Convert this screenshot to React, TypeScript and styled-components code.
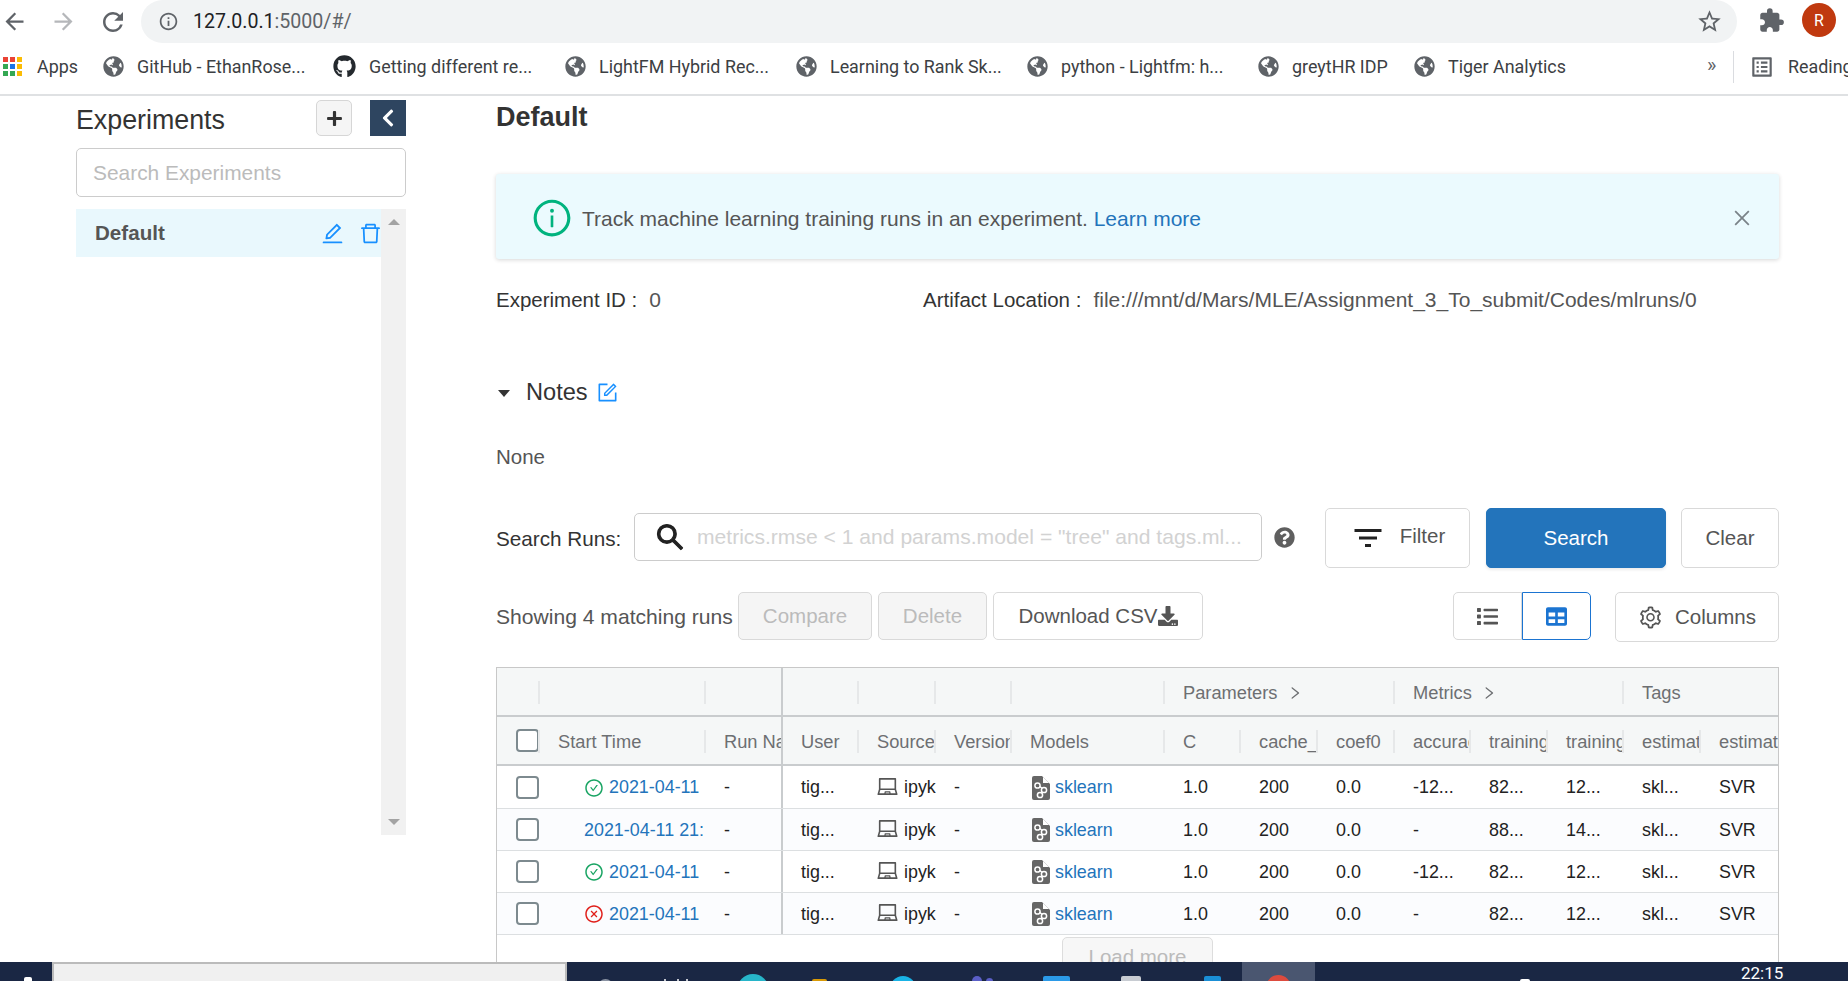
import React from "react";
import styled, { createGlobalStyle } from "styled-components";
import {
  AiOutlineCheckCircle,
  AiOutlineClose,
  AiOutlineCloseCircle,
  AiOutlineDelete,
  AiOutlineEdit,
  AiOutlineForm,
  AiOutlineInfoCircle,
  AiOutlineLaptop,
  AiOutlineRight,
  AiOutlineSearch,
  AiOutlineSetting,
} from "react-icons/ai";
import {
  FaChevronLeft,
  FaDownload,
  FaGithub,
  FaGlobeAmericas,
  FaList,
  FaPlus,
  FaQuestionCircle,
  FaTable,
} from "react-icons/fa";
import {
  MdArrowBack,
  MdArrowForward,
  MdExtension,
  MdFilterList,
  MdInfoOutline,
  MdOutlineListAlt,
  MdRefresh,
  MdStarBorder,
} from "react-icons/md";

const GlobalStyle = createGlobalStyle`
    html, body {
        margin: 0;
        padding: 0;
        background: #fff;
    }
    * {
        box-sizing: border-box;
    }
`;

const Screen = styled.div`
  width: 1848px;
  height: 981px;
  overflow: hidden;
  display: flex;
  flex-direction: column;
  font-family: "Liberation Sans", Arial, sans-serif;
  color: #333;
`;

/* browser chrome */
const Toolbar = styled.div`
  height: 43px;
  flex: none;
  display: flex;
  align-items: stretch;
`;

const NavButton = styled.div<{ $dim?: boolean }>`
  width: 49px;
  flex: none;
  display: flex;
  align-items: center;
  justify-content: center;
  font-size: 27px;
  color: ${(p) => (p.$dim ? "#b5b7ba" : "#5f6368")};
`;

const NavGroup = styled.div`
  width: 141px;
  flex: none;
  display: flex;
  & > :first-child {
    margin-left: -10px;
  }
`;

const AddressBar = styled.div`
  width: 1596px;
  flex: none;
  background: #f1f3f4;
  border-radius: 24px;
  display: flex;
  align-items: center;
  padding: 0 14px 0 17px;
  font-family: Roboto, sans-serif;
  font-size: 19.6px;
  color: #202124;
  svg {
    color: #5f6368;
  }
`;

const Url = styled.span`
  margin-left: 14px;
  flex: 1;
  span {
    color: #5f6368;
  }
`;

const Avatar = styled.div`
  width: 34px;
  height: 34px;
  border-radius: 50%;
  background: #c0390f;
  color: #fff;
  font-family: Roboto, sans-serif;
  font-size: 16px;
  display: flex;
  align-items: center;
  justify-content: center;
`;

const ProfileArea = styled.div`
  flex: 1;
  display: flex;
  align-items: center;
  padding: 0 0 3px 21px;
  gap: 17px;
  color: #5f6368;
`;

const BookmarkBar = styled.div`
  height: 53px;
  flex: none;
  border-bottom: 2px solid #dfe1e3;
  display: flex;
  align-items: center;
  padding: 0 0 4px 3px;
  font-family: Roboto, sans-serif;
  font-size: 17.9px;
  color: #3c4043;
  white-space: nowrap;
  overflow: hidden;
`;

const Bookmark = styled.div<{ $w: number; $gap?: number }>`
  width: ${(p) => p.$w}px;
  flex: none;
  display: flex;
  align-items: center;
  gap: ${(p) => p.$gap ?? 13}px;
  svg {
    color: #5f6368;
    flex: none;
  }
`;

const BookmarkEnd = styled.div`
  flex: 1;
  display: flex;
  align-items: center;
  color: #5f6368;
`;

const Chevrons = styled.span`
  margin-left: 133px;
  width: 27px;
  height: 32px;
  border-right: 1px solid #dadce0;
  font-size: 20px;
  line-height: 28px;
`;

const ReadingIcon = styled(MdOutlineListAlt)`
  margin-left: 15px;
  flex: none;
`;

const ReadingLabel = styled.span`
  margin-left: 13px;
  color: #3c4043;
`;

const AppsGrid = styled.div`
  width: 20px;
  height: 20px;
  flex: none;
  display: grid;
  grid-template-columns: repeat(3, 5px);
  grid-auto-rows: 5px;
  gap: 2px;
`;

const AppsDot = styled.i<{ $c: string }>`
  background: ${(p) => p.$c};
`;

/* page body */
const Body = styled.div`
  flex: 1;
  min-height: 0;
  display: flex;
  overflow: hidden;
  padding-left: 76px;
`;

const Sidebar = styled.aside`
  width: 330px;
  flex: none;
  padding-top: 4px;
  display: flex;
  flex-direction: column;
`;

const SideHead = styled.div`
  display: flex;
  align-items: center;
  height: 36px;
`;

const SideTitle = styled.div`
  flex: 1;
  padding-top: 4px;
  font-size: 26.8px;
  color: #333;
`;

const PlusButton = styled.div`
  width: 36px;
  height: 36px;
  border: 1px solid #d6d6d6;
  border-radius: 5px;
  background: #f5f5f5;
  color: #333;
  font-size: 17px;
  display: flex;
  align-items: center;
  justify-content: center;
  margin-right: 18px;
`;

const CollapseButton = styled.div`
  width: 36px;
  height: 36px;
  background: #2e4560;
  color: #fff;
  font-size: 20px;
  display: flex;
  align-items: center;
  justify-content: center;
`;

const SideSearch = styled.div`
  height: 49px;
  margin-top: 12px;
  border: 1px solid #ccc;
  border-radius: 5px;
  padding-left: 16px;
  display: flex;
  align-items: center;
  font-size: 20.9px;
  color: #bbb;
`;

const ExperimentList = styled.div`
  margin-top: 12px;
  height: 626px;
  display: flex;
`;

const ListColumn = styled.div`
  flex: 1;
`;

const ExperimentItem = styled.div`
  height: 48px;
  background: #e9f8fd;
  display: flex;
  align-items: center;
  padding: 0 0 0 19px;
  font-size: 20.6px;
  font-weight: 700;
  color: #555;
  svg {
    color: #1890ff;
    font-size: 25px;
  }
`;

const ItemName = styled.span`
  flex: 1;
`;

const ItemIcons = styled.span`
  display: flex;
  gap: 13px;
  margin-right: -2px;
`;

const ScrollTrack = styled.div`
  width: 25px;
  background: #f1f1f1;
  display: flex;
  flex-direction: column;
  justify-content: space-between;
  align-items: center;
  padding: 10px 0;
`;

const ScrollArrow = styled.i<{ $down?: boolean }>`
  width: 0;
  height: 0;
  border-left: 6px solid transparent;
  border-right: 6px solid transparent;
  ${(p) =>
    p.$down ? "border-top: 6px solid #a3a3a3;" : "border-bottom: 6px solid #a3a3a3;"}
`;

const Main = styled.main`
  width: 1283px;
  flex: none;
  margin-left: 90px;
  padding-top: 4px;
  font-size: 20.5px;
`;

const Title = styled.h1`
  margin: 0;
  height: 34px;
  line-height: 34px;
  font-size: 27px;
  font-weight: 700;
  color: #333;
`;

const Alert = styled.div`
  margin-top: 40px;
  height: 85px;
  background: #ebfafe;
  border-radius: 3px;
  box-shadow: 0 1px 4px rgba(0, 0, 0, 0.16);
  display: flex;
  align-items: center;
  padding: 2px 26px 0 38px;
  font-size: 21px;
  color: #555;
`;

const AlertIcon = styled(AiOutlineInfoCircle)`
  color: #00b37e;
  font-size: 42px;
  margin: 0 9px 0 -3px;
`;

const AlertText = styled.span`
  flex: 1;
  padding-top: 2px;
`;

const Anchor = styled.a`
  color: #2374bb;
`;

const CloseIcon = styled(AiOutlineClose)`
  color: #7a8288;
  font-size: 22px;
`;

const Details = styled.div`
  margin-top: 29px;
  height: 24px;
  line-height: 24px;
  display: flex;
`;

const Detail = styled.div<{ $w?: number }>`
  width: ${(p) => (p.$w ? `${p.$w}px` : "auto")};
  color: #555;
  font-size: 21px;
  white-space: nowrap;
`;

const DetailLabel = styled.span`
  color: #333;
  font-size: 20.5px;
  margin-right: 12px;
`;

const NotesRow = styled.div`
  margin-top: 68px;
  height: 24px;
  display: flex;
  align-items: center;
  font-size: 23.6px;
  color: #333;
  svg {
    color: #1890ff;
    font-size: 23px;
    margin-left: 8px;
  }
`;

const Caret = styled.i`
  width: 0;
  height: 0;
  margin: 2px 16px 0 2px;
  border-left: 6.5px solid transparent;
  border-right: 6.5px solid transparent;
  border-top: 7px solid #333;
`;

const NotesBody = styled.div`
  margin-top: 41px;
  height: 24px;
  line-height: 24px;
  color: #555;
`;

const SearchRow = styled.div`
  margin-top: 39px;
  height: 60px;
  display: flex;
  align-items: center;
`;

const SearchLabel = styled.span`
  width: 138px;
  flex: none;
  font-size: 20.7px;
  padding-top: 1px;
`;

const QueryBox = styled.div`
  width: 628px;
  height: 48px;
  border: 1px solid #ccc;
  border-radius: 5px;
  display: flex;
  align-items: center;
  padding-left: 20px;
  margin-top: -2px;
  font-size: 21.1px;
  color: #d2d2d2;
  white-space: nowrap;
  overflow: hidden;
`;

const QueryIcon = styled(AiOutlineSearch)`
  color: #222;
  font-size: 32px;
  flex: none;
  margin: 0 11px 0 -1px;
  stroke: currentColor;
  stroke-width: 40;
`;

const HelpIcon = styled(FaQuestionCircle)`
  color: #5f5f5f;
  font-size: 21px;
  flex: none;
  margin: -2px 30px 0 12px;
`;

const Button = styled.div<{ $w: number; $h?: number; $primary?: boolean; $off?: boolean }>`
  width: ${(p) => p.$w}px;
  height: ${(p) => p.$h ?? 60}px;
  flex: none;
  border: 1px solid ${(p) => (p.$primary ? "#2374bb" : "#d9d9d9")};
  border-radius: 5px;
  background: ${(p) => (p.$primary ? "#2374bb" : p.$off ? "#f5f5f5" : "#fff")};
  color: ${(p) => (p.$primary ? "#fff" : p.$off ? "#bbb" : "#555")};
  display: flex;
  align-items: center;
  justify-content: center;
  font-size: 20.5px;
  white-space: nowrap;
`;

const FilterButton = styled(Button)`
  gap: 14px;
  margin-right: 16px;
  svg {
    color: #222;
    font-size: 36px;
  }
`;

const FilterLabel = styled.span`
  margin-top: -4px;
`;

const SearchButton = styled(Button)`
  margin-right: 15px;
  box-shadow: 0 2px 3px rgba(0, 0, 0, 0.08);
`;

const ActionRow = styled.div`
  margin-top: 24px;
  height: 50px;
  display: flex;
  align-items: flex-start;
`;

const RunCount = styled.span`
  width: 242px;
  flex: none;
  height: 48px;
  line-height: 50px;
  font-size: 21.1px;
  color: #555;
`;

const ActionGroup = styled.div`
  flex: 1;
  display: flex;
  gap: 6px;
`;

const DownloadIcon = styled(FaDownload)`
  color: #555;
  font-size: 20px;
`;

const ViewToggle = styled.div<{ $on?: boolean }>`
  width: 69px;
  height: 48px;
  flex: none;
  border: 1px solid ${(p) => (p.$on ? "#1b74d1" : "#d9d9d9")};
  border-radius: ${(p) => (p.$on ? "0 5px 5px 0" : "5px 0 0 5px")};
  color: ${(p) => (p.$on ? "#1b74d1" : "#555")};
  display: flex;
  align-items: center;
  justify-content: center;
  font-size: 21px;
`;

const ColumnsButton = styled(Button)`
  margin-left: 24px;
  gap: 12px;
  svg {
    font-size: 25px;
  }
`;

/* runs table */
const Table = styled.div`
  margin-top: 25px;
  width: 1283px;
  height: 300px;
  border: 1px solid #c8c8c8;
  border-bottom: none;
  position: relative;
  font-size: 17.9px;
`;

const Row = styled.div<{ $h: number; $alt?: boolean; $head?: boolean; $strong?: boolean }>`
  height: ${(p) => p.$h}px;
  display: grid;
  grid-template-columns: 43px 166px 77px 76px 77px 76px 153px 76px 77px 77px 76px 77px 76px 77px 77px;
  background: ${(p) => (p.$head ? "#f5f7f7" : p.$alt ? "#fbfcfe" : "#fff")};
  border-bottom: ${(p) => (p.$strong ? "2px solid #c9ccce" : "1px solid #dcdfe1")};
  color: ${(p) => (p.$head ? "#6d6f72" : "#222")};
`;

const HeadCell = styled.div<{ $divider?: boolean; $fixedEnd?: boolean; $span?: number }>`
  grid-column: span ${(p) => p.$span ?? 1};
  position: relative;
  display: flex;
  align-items: center;
  gap: 9px;
  padding: 3px 0 0 18px;
  font-size: 18.3px;
  white-space: nowrap;
  overflow: hidden;
  border-right: ${(p) => (p.$fixedEnd ? "2px solid #c9ccce" : "none")};
  &::after {
    content: "";
    display: ${(p) => (p.$divider ? "block" : "none")};
    position: absolute;
    right: 0;
    top: 13px;
    bottom: 11px;
    width: 2px;
    background: #e6e8e9;
  }
  svg {
    font-size: 16px;
  }
`;

const BoxCell = styled.div`
  display: flex;
  align-items: center;
  padding-left: 19px;
`;

const Check = styled.i`
  width: 23px;
  height: 23px;
  flex: none;
  border: 2px solid #7d8a8f;
  border-radius: 4px;
  background: #fff;
`;

const HeadBoxCell = styled(HeadCell)`
  padding: 0 0 0 19px;
`;

const Cell = styled.div<{ $fixedEnd?: boolean }>`
  display: flex;
  align-items: center;
  gap: 5px;
  padding: 1px 0 0 18px;
  white-space: nowrap;
  overflow: hidden;
  border-right: ${(p) => (p.$fixedEnd ? "2px solid #c9ccce" : "none")};
`;

const TimeCell = styled(Cell)`
  padding-left: 44px;
`;

const RunLink = styled.span`
  color: #2374bb;
`;

const OkIcon = styled(AiOutlineCheckCircle)`
  color: #19a463;
  font-size: 20px;
  flex: none;
`;

const FailIcon = styled(AiOutlineCloseCircle)`
  color: #e0201b;
  font-size: 20px;
  flex: none;
`;

const SourceIcon = styled(AiOutlineLaptop)`
  color: #555;
  font-size: 23px;
  flex: none;
  margin: -3px 0 0 -1px;
`;

const ModelDoc = styled.svg`
  width: 18px;
  height: 24px;
  flex: none;
  margin-left: 2px;
`;

const LoadMore = styled.div`
  position: absolute;
  left: 565px;
  top: 269px;
  width: 151px;
  height: 40px;
  border: 1px solid #ddd;
  border-radius: 5px;
  background: #f7f7f7;
  color: #bbb;
  font-size: 20.5px;
  display: flex;
  align-items: center;
  justify-content: center;
`;

/* windows taskbar */
const Taskbar = styled.div`
  height: 19px;
  flex: none;
  background: #1a2744;
  position: relative;
  overflow: hidden;
  display: flex;
`;

const WinSearch = styled.div`
  width: 515px;
  margin-left: 52px;
  background: #f0f0f0;
  border: 2px solid #bbb;
  border-bottom: none;
  flex: none;
`;

const TrayIcon = styled.i<{ $x: number; $w: number; $top: number; $c: string; $round?: boolean }>`
  position: absolute;
  left: ${(p) => p.$x}px;
  top: ${(p) => p.$top}px;
  width: ${(p) => p.$w}px;
  height: ${(p) => p.$w}px;
  background: ${(p) => p.$c};
  border-radius: ${(p) => (p.$round ? "50%" : "2px")};
`;

const ActiveTask = styled.div`
  position: absolute;
  left: 1242px;
  top: 0;
  width: 73px;
  height: 19px;
  background: #4a5670;
`;

const Clock = styled.span`
  position: absolute;
  left: 1741px;
  top: 1px;
  font-family: Roboto, sans-serif;
  font-size: 17px;
  color: #fff;
`;

const appColours = ["#ea4335", "#ea4335", "#fbbc04", "#34a853", "#1a73e8", "#fbbc04", "#34a853", "#34a853", "#fbbc04"];

const bookmarks = [
  { w: 230, text: "GitHub - EthanRose..." },
  { w: 232, text: "Getting different re...", github: true },
  { w: 231, text: "LightFM Hybrid Rec..." },
  { w: 231, text: "Learning to Rank Sk..." },
  { w: 231, text: "python - Lightfm: h..." },
  { w: 156, text: "greytHR IDP" },
  { w: 160, text: "Tiger Analytics" },
];

const runs = [
  { status: "ok", time: "2021-04-11", acc: "-12...", t1: "82...", t2: "12..." },
  { status: "none", time: "2021-04-11 21:", acc: "-", t1: "88...", t2: "14..." },
  { status: "ok", time: "2021-04-11", acc: "-12...", t1: "82...", t2: "12..." },
  { status: "fail", time: "2021-04-11", acc: "-", t1: "82...", t2: "12..." },
];

const headers = ["C", "cache_s", "coef0", "accurac", "training", "training", "estimat", "estimat"];

const trayIcons = [
  { x: 24, w: 8, top: 15, c: "#fff" },
  { x: 598, w: 15, top: 17, c: "#8b93a3", round: true },
  { x: 664, w: 2, top: 17, c: "#fff" },
  { x: 677, w: 2, top: 17, c: "#fff" },
  { x: 686, w: 2, top: 17, c: "#fff" },
  { x: 737, w: 32, top: 12, c: "#27b5c9", round: true },
  { x: 812, w: 15, top: 17, c: "#d99a06" },
  { x: 890, w: 26, top: 14, c: "#19b3e6", round: true },
  { x: 972, w: 10, top: 14, c: "#5b5fc7", round: true },
  { x: 986, w: 7, top: 16, c: "#5b5fc7", round: true },
  { x: 1043, w: 27, top: 14, c: "#2b9ae8" },
  { x: 1121, w: 20, top: 14, c: "#c8ccd2" },
  { x: 1204, w: 17, top: 14, c: "#1a8fd6" },
  { x: 1266, w: 25, top: 13, c: "#dd4b3e", round: true },
  { x: 1520, w: 10, top: 17, c: "#fff" },
];

function ModelIcon() {
  return (
    <ModelDoc viewBox="0 0 18 24">
      <path d="M2 0h8l8 8v14a2 2 0 0 1-2 2H2a2 2 0 0 1-2-2V2a2 2 0 0 1 2-2z" fill="#666" />
      <path d="M11 1l6 6h-6z" fill="#fff" />
      <path d="M6 9l6 5-3 3" fill="none" stroke="#fff" strokeWidth="1.6" />
      <circle cx="5.5" cy="9.5" r="2.6" fill="#666" stroke="#fff" strokeWidth="1.5" />
      <circle cx="12" cy="14" r="2.6" fill="#666" stroke="#fff" strokeWidth="1.5" />
      <circle cx="8" cy="19" r="2.6" fill="#666" stroke="#fff" strokeWidth="1.5" />
    </ModelDoc>
  );
}

export default function App() {
  return (
    <Screen>
      <GlobalStyle />
      <Toolbar>
        <NavGroup>
          <NavButton><MdArrowBack /></NavButton>
          <NavButton $dim><MdArrowForward /></NavButton>
          <NavButton><MdRefresh size={30} /></NavButton>
        </NavGroup>
        <AddressBar>
          <MdInfoOutline size={21} />
          <Url>127.0.0.1<span>:5000/#/</span></Url>
          <MdStarBorder size={27} />
        </AddressBar>
        <ProfileArea>
          <MdExtension size={27} />
          <Avatar>R</Avatar>
        </ProfileArea>
      </Toolbar>
      <BookmarkBar>
        <Bookmark $w={100} $gap={14}>
          <AppsGrid>
            {appColours.map((c, i) => (
              <AppsDot key={i} $c={c} />
            ))}
          </AppsGrid>
          Apps
        </Bookmark>
        {bookmarks.map((b) => (
          <Bookmark key={b.text} $w={b.w}>
            {b.github ? <FaGithub size={23} color="#24292e" /> : <FaGlobeAmericas size={21} />}
            {b.text}
          </Bookmark>
        ))}
        <BookmarkEnd>
          <Chevrons>»</Chevrons>
          <ReadingIcon size={26} />
          <ReadingLabel>Reading list</ReadingLabel>
        </BookmarkEnd>
      </BookmarkBar>

      <Body>
        <Sidebar>
          <SideHead>
            <SideTitle>Experiments</SideTitle>
            <PlusButton><FaPlus /></PlusButton>
            <CollapseButton><FaChevronLeft /></CollapseButton>
          </SideHead>
          <SideSearch>Search Experiments</SideSearch>
          <ExperimentList>
            <ListColumn>
              <ExperimentItem>
                <ItemName>Default</ItemName>
                <ItemIcons>
                  <AiOutlineEdit />
                  <AiOutlineDelete />
                </ItemIcons>
              </ExperimentItem>
            </ListColumn>
            <ScrollTrack>
              <ScrollArrow />
              <ScrollArrow $down />
            </ScrollTrack>
          </ExperimentList>
        </Sidebar>

        <Main>
          <Title>Default</Title>
          <Alert>
            <AlertIcon />
            <AlertText>
              Track machine learning training runs in an experiment. <Anchor>Learn more</Anchor>
            </AlertText>
            <CloseIcon />
          </Alert>
          <Details>
            <Detail $w={427}><DetailLabel>Experiment ID :</DetailLabel>0</Detail>
            <Detail>
              <DetailLabel>Artifact Location :</DetailLabel>
              file:///mnt/d/Mars/MLE/Assignment_3_To_submit/Codes/mlruns/0
            </Detail>
          </Details>
          <NotesRow>
            <Caret />
            Notes
            <AiOutlineForm />
          </NotesRow>
          <NotesBody>None</NotesBody>

          <SearchRow>
            <SearchLabel>Search Runs:</SearchLabel>
            <QueryBox>
              <QueryIcon />
              metrics.rmse &lt; 1 and params.model = "tree" and tags.ml...
            </QueryBox>
            <HelpIcon />
            <FilterButton $w={145}>
              <MdFilterList />
              <FilterLabel>Filter</FilterLabel>
            </FilterButton>
            <SearchButton $w={180} $primary>Search</SearchButton>
            <Button $w={98}>Clear</Button>
          </SearchRow>

          <ActionRow>
            <RunCount>Showing 4 matching runs</RunCount>
            <ActionGroup>
              <Button $w={134} $h={48} $off>Compare</Button>
              <Button $w={109} $h={48} $off>Delete</Button>
              <Button $w={210} $h={48}>Download CSV<DownloadIcon /></Button>
            </ActionGroup>
            <ViewToggle><FaList /></ViewToggle>
            <ViewToggle $on><FaTable /></ViewToggle>
            <ColumnsButton $w={164} $h={50}>
              <AiOutlineSetting />
              Columns
            </ColumnsButton>
          </ActionRow>

          <Table>
            <Row $h={49} $head $strong>
              <HeadCell $divider />
              <HeadCell $divider />
              <HeadCell $fixedEnd />
              <HeadCell $divider />
              <HeadCell $divider />
              <HeadCell $divider />
              <HeadCell $divider />
              <HeadCell $span={3} $divider>Parameters <AiOutlineRight /></HeadCell>
              <HeadCell $span={3} $divider>Metrics <AiOutlineRight /></HeadCell>
              <HeadCell $span={2}>Tags</HeadCell>
            </Row>
            <Row $h={49} $head $strong>
              <HeadBoxCell $divider><Check /></HeadBoxCell>
              <HeadCell $divider>Start Time</HeadCell>
              <HeadCell $fixedEnd>Run Name</HeadCell>
              <HeadCell $divider>User</HeadCell>
              <HeadCell $divider>Source</HeadCell>
              <HeadCell $divider>Version</HeadCell>
              <HeadCell $divider>Models</HeadCell>
              {headers.map((h, i) => (
                <HeadCell key={i} $divider={i < 7}>{h}</HeadCell>
              ))}
            </Row>
            {runs.map((r, i) => (
              <Row key={i} $h={i === 0 ? 43 : 42} $alt={i % 2 === 1}>
                <BoxCell><Check /></BoxCell>
                <TimeCell>
                  {r.status === "ok" && <OkIcon />}
                  {r.status === "fail" && <FailIcon />}
                  <RunLink>{r.time}</RunLink>
                </TimeCell>
                <Cell $fixedEnd>-</Cell>
                <Cell>tig...</Cell>
                <Cell><SourceIcon />ipyk</Cell>
                <Cell>-</Cell>
                <Cell><ModelIcon /><RunLink>sklearn</RunLink></Cell>
                <Cell>1.0</Cell>
                <Cell>200</Cell>
                <Cell>0.0</Cell>
                <Cell>{r.acc}</Cell>
                <Cell>{r.t1}</Cell>
                <Cell>{r.t2}</Cell>
                <Cell>skl...</Cell>
                <Cell>SVR</Cell>
              </Row>
            ))}
            <LoadMore>Load more</LoadMore>
          </Table>
        </Main>
      </Body>

      <Taskbar>
        <WinSearch />
        <ActiveTask />
        {trayIcons.map((t) => (
          <TrayIcon key={t.x} $x={t.x} $w={t.w} $top={t.top} $c={t.c} $round={t.round} />
        ))}
        <Clock>22:15</Clock>
      </Taskbar>
    </Screen>
  );
}
